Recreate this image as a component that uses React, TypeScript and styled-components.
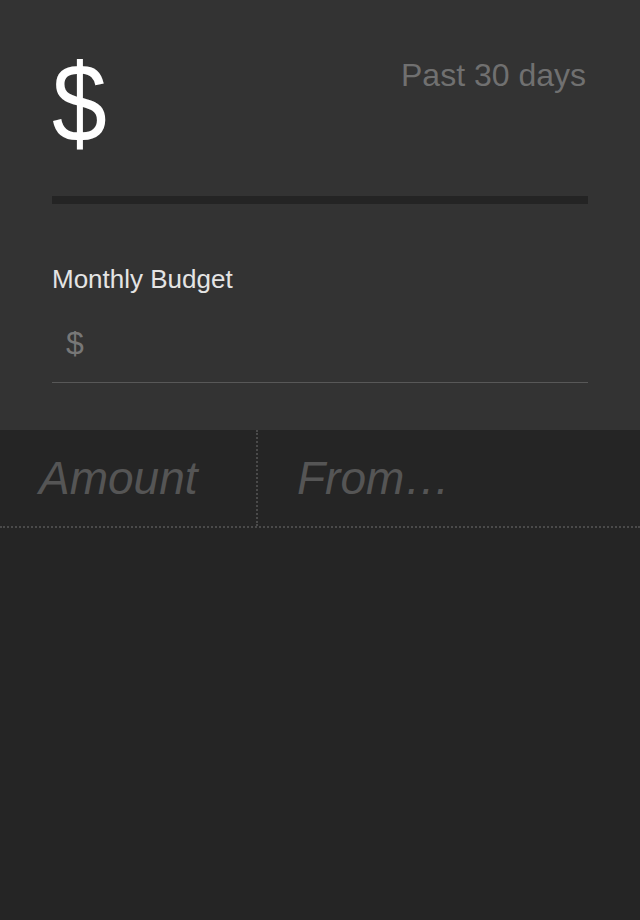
import React from "react";
import styled, { createGlobalStyle } from "styled-components";

const Global = createGlobalStyle`
  html, body {
    margin: 0;
    padding: 0;
    background: #252525;
    font-family: "Liberation Sans", Arial, sans-serif;
  }
  * { box-sizing: border-box; }
`;

const Page = styled.div`
  width: 640px;
  min-height: 920px;
  background: #252525;
`;

const Summary = styled.section`
  background: #333333;
  padding: 48px 52px 47px;
`;

const Header = styled.div`
  display: flex;
  justify-content: space-between;
  align-items: flex-start;
`;

const BigDollar = styled.div`
  font-size: 112px;
  line-height: 1;
  color: #ffffff;
  transform: scaleX(0.88);
  transform-origin: left center;
`;

const Period = styled.div`
  font-size: 32px;
  line-height: 1;
  color: #707070;
  margin-top: 11px;
  margin-right: 2px;
`;

const Meter = styled.div`
  height: 8px;
  background: #242424;
  margin-top: 36px;
`;

const Label = styled.div`
  margin-top: 62px;
  font-size: 26px;
  line-height: 1;
  color: #e4e4e4;
`;

const Field = styled.div`
  margin-top: 35px;
  padding: 0 0 23px 14px;
  border-bottom: 1px solid #585858;
  display: flex;
  align-items: center;
`;

const Currency = styled.span`
  font-size: 32px;
  line-height: 1;
  color: #777777;
`;

const Entry = styled.div`
  display: flex;
  height: 98px;
  border-bottom: 2px dotted #4a4a4a;
`;

const Cell = styled.div<{ $width?: number; $divider?: boolean }>`
  display: flex;
  align-items: center;
  padding-left: 39px;
  ${(p) => (p.$width ? `width: ${p.$width}px; flex: none;` : "flex: 1;")}
  ${(p) => (p.$divider ? "border-right: 2px dotted #4a4a4a;" : "")}
  font-size: 46px;
  line-height: 1;
  font-style: italic;
  color: #555555;
`;

export default function App() {
  return (
    <>
      <Global />
      <Page>
        <Summary>
          <Header>
            <BigDollar>$</BigDollar>
            <Period>Past 30 days</Period>
          </Header>
          <Meter />
          <Label>Monthly Budget</Label>
          <Field>
            <Currency>$</Currency>
          </Field>
        </Summary>
        <Entry>
          <Cell $width={258} $divider>Amount</Cell>
          <Cell>From…</Cell>
        </Entry>
      </Page>
    </>
  );
}
